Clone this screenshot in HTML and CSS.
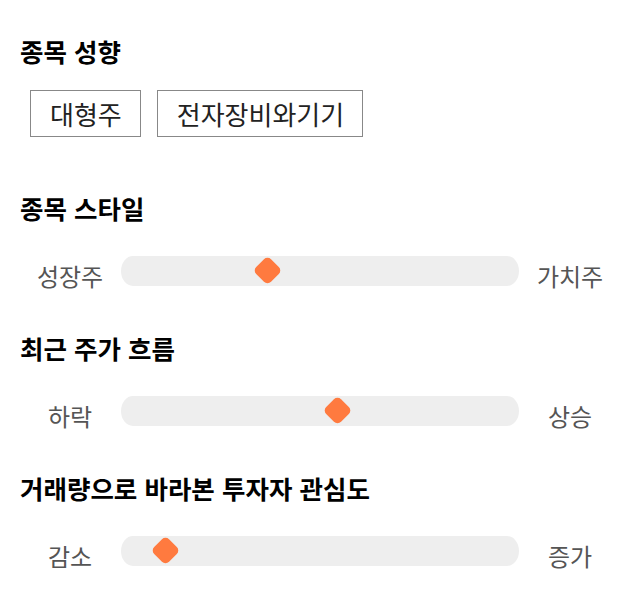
FILE: index.html
```html
<!DOCTYPE html>
<html lang="ko">
<head>
<meta charset="utf-8">
<link rel="stylesheet" href="styles.css">
</head>
<body>
<main class="page">
  <section class="section section-tags">
    <h2 class="title">종목 성향</h2>
    <div class="tags">
      <span class="tag">대형주</span>
      <span class="tag">전자장비와기기</span>
    </div>
  </section>
  <section class="section">
    <h2 class="title">종목 스타일</h2>
    <div class="slider-row">
      <span class="label">성장주</span>
      <div class="track"><span class="thumb" style="left: 146px"></span></div>
      <span class="label">가치주</span>
    </div>
  </section>
  <section class="section">
    <h2 class="title">최근 주가 흐름</h2>
    <div class="slider-row">
      <span class="label">하락</span>
      <div class="track"><span class="thumb" style="left: 216px"></span></div>
      <span class="label">상승</span>
    </div>
  </section>
  <section class="section">
    <h2 class="title">거래량으로 바라본 투자자 관심도</h2>
    <div class="slider-row">
      <span class="label">감소</span>
      <div class="track"><span class="thumb" style="left: 44px"></span></div>
      <span class="label">증가</span>
    </div>
  </section>
</main>
</body>
</html>
```
FILE: styles.css
```css
html, body {
  margin: 0;
  padding: 0;
  background: #ffffff;
}
body {
  font-family: "Noto Sans CJK KR", "Noto Sans", sans-serif;
  color: #111;
}
.page {
  padding: 33px 20px 0 20px;
  display: flex;
  flex-direction: column;
}
.section {
  display: flex;
  flex-direction: column;
  margin-bottom: 39px;
}
.section-tags {
  margin-bottom: 53px;
}
.title {
  margin: 0;
  font-size: 25.5px;
  font-weight: 700;
  line-height: 36px;
  height: 36px;
  color: #000;
}
.tags {
  display: flex;
  gap: 16px;
  margin-top: 21px;
  padding-left: 10px;
}
.tag {
  box-sizing: border-box;
  height: 47px;
  border: 1px solid #888;
  padding: 0 18px 0 19px;
  font-size: 26px;
  line-height: 45px;
  color: #222;
}
.slider-row {
  display: grid;
  grid-template-columns: 100px 1fr 100px;
  align-items: center;
  height: 40px;
  margin-top: 25px;
}
.label {
  text-align: center;
  font-size: 24px;
  color: #555;
  padding-top: 10px;
  line-height: 30px;
}
.track {
  position: relative;
  height: 30px;
  margin: 0 1px;
  background: #eeeeee;
  border-radius: 12px / 15px;
}
.thumb {
  position: absolute;
  top: 4px;
  width: 21px;
  height: 21px;
  margin-left: -10.5px;
  background: #ff7a3f;
  border-radius: 5px;
  transform: rotate(45deg);
}
```
